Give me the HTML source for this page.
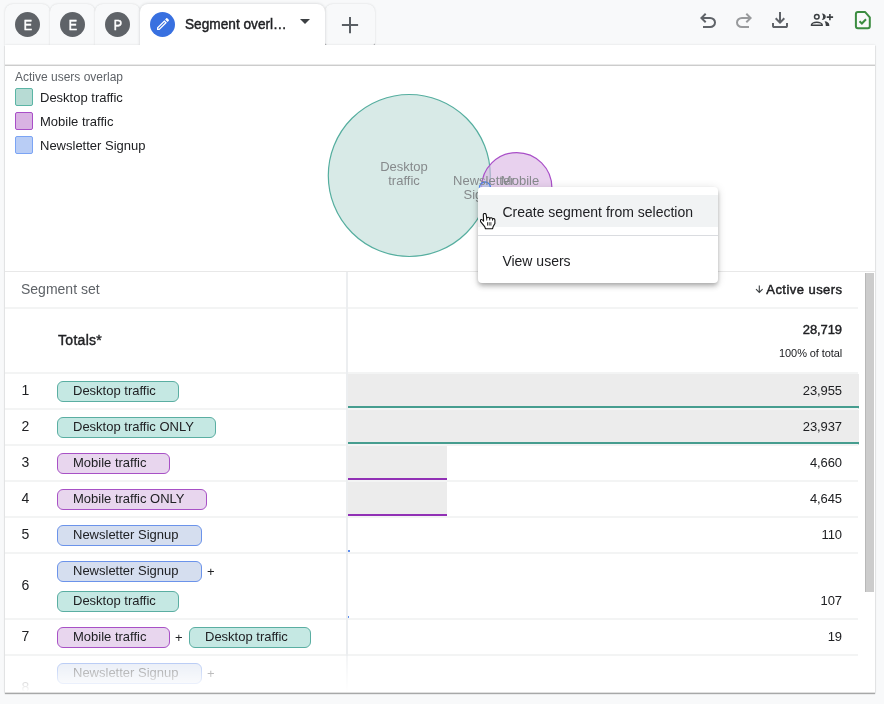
<!DOCTYPE html>
<html><head><meta charset="utf-8"><title>Segment overlap</title>
<style>
*{box-sizing:border-box;margin:0;padding:0}
html,body{width:884px;height:704px;overflow:hidden;background:#f8f9fa;font-family:"Liberation Sans",sans-serif;color:#202124}
.abs{position:absolute}
#panel{position:absolute;left:5px;top:45px;width:870px;height:648px;background:#fff;border-bottom:1px solid #e0e0e0;box-shadow:0 1px 1px rgba(0,0,0,.3),0 0 2px rgba(60,64,67,.14)}
.tab{position:absolute;top:4px;height:41px;clip-path:inset(-5px -5px 0 -5px);background:#f8f9fa;border-radius:8px 8px 0 0;box-shadow:0 0 2px rgba(60,64,67,.2)}
.tab.act{background:#fff;box-shadow:0 0 3px rgba(60,64,67,.25);z-index:2}
.av{position:absolute;top:8px;width:25px;height:25px;border-radius:50%;background:#5f6368;color:#fff;font-size:15px;-webkit-text-stroke:.5px #fff;text-align:center;line-height:25px}
.av span{display:inline-block;transform:scaleX(.83);margin-left:1px}
#hline{position:absolute;left:5px;top:64px;width:870px;height:2px;background:linear-gradient(#e9e9e9 50%,#cccccc 50%)}
.lg{position:absolute;left:15px;width:18px;height:18px;border-radius:2px;border:1px solid}
.lt{position:absolute;left:40px;margin-top:1px;font-size:13px;line-height:18px;white-space:nowrap}
.row{position:absolute;left:5px;width:853px;border-top:2px solid #f3f4f4}
.num{position:absolute;left:21.5px;margin-top:-1px;font-size:14px;color:#202124}
.chip{position:absolute;height:21px;border:1px solid;border-radius:6px;font-size:13px;line-height:18px;padding:0 0 0 15px;white-space:nowrap}
.c-d{background:#c5e8e3;border-color:#5aaea2}
.c-m{background:#e8d6ee;border-color:#a851c6}
.c-n{background:#d5deef;border-color:#6b93ea}
.val{position:absolute;right:42px;letter-spacing:-.1px;font-size:13px;text-align:right;white-space:nowrap}
.plus{position:absolute;font-size:13px}
</style></head><body>
<div id="wrap" style="position:absolute;left:0;top:0;width:884px;height:704px;will-change:transform">
<!-- tabs -->
<div class="tab" style="left:5px;width:45px"><div class="av" style="left:10px"><span>E</span></div></div>
<div class="tab" style="left:50px;width:45px"><div class="av" style="left:10px"><span>E</span></div></div>
<div class="tab" style="left:95px;width:45px"><div class="av" style="left:10px"><span>P</span></div></div>
<div class="abs" style="left:325px;top:42px;width:50px;height:3px;background:#9a9ea2"></div>
<div class="tab" style="left:325px;width:50px;border-radius:8px 8px 2px 2px"></div>
<div class="tab act" style="left:140px;width:185px">
  <div class="av" style="left:10px;background:#3870e0"></div>
  <div class="abs" style="left:45px;top:11px;font-size:14.7px;-webkit-text-stroke:.45px #202124;white-space:nowrap;line-height:18px;transform:scaleX(.93);transform-origin:0 0">Segment overl…</div>
</div>
<div id="panel"></div>
<div id="hline"></div>
<div class="abs" style="left:15px;top:70px;font-size:12px;color:#5f6368;line-height:14px;white-space:nowrap">Active users overlap</div>
<div class="lg" style="top:88px;background:#b7dbd4;border-color:#5bb5a5"></div><div class="lt" style="top:88px">Desktop traffic</div>
<div class="lg" style="top:112px;background:#d9b3e3;border-color:#a94fc8"></div><div class="lt" style="top:112px">Mobile traffic</div>
<div class="lg" style="top:136px;background:#b9cdf5;border-color:#7ba4f4"></div><div class="lt" style="top:136px">Newsletter Signup</div>

<!-- venn -->
<svg class="abs" style="left:0;top:0" width="884" height="704" viewBox="0 0 884 704">
  <circle cx="409.3" cy="175.5" r="81" fill="#d8eae7" stroke="#55ae9f" stroke-width="1.2"/>
  <circle cx="516.7" cy="187.800" r="35.2" fill="#d9b3e3" fill-opacity=".6" stroke="#a94fc8" stroke-width="1.2"/>
  <circle cx="485" cy="187.5" r="5.5" fill="#b9cdf5" fill-opacity=".6" stroke="#4a80f0" stroke-width="1.300"/>
  <g font-family="Liberation Sans, sans-serif" font-size="13" fill="#868a8c" text-anchor="middle">
    <text x="404" y="171.400">Desktop</text><text x="404" y="185.400">traffic</text>
    <text x="483.800" y="185.400">Newsletter</text><text x="483.800" y="199.400">Signup</text>
    <text x="520" y="185.400">Mobile</text>
  </g>
</svg>
<!-- table -->
<div class="abs" style="left:5px;top:271px;height:1px;width:870px;background:#e8e8e8"></div>
<div class="abs" style="left:21px;top:281px;font-size:14px;color:#5f6368;line-height:16px">Segment set</div>
<div class="abs" style="right:41.500px;top:282px;font-size:13px;letter-spacing:.45px;-webkit-text-stroke:.45px #202124;line-height:16px;white-space:nowrap">Active users</div>
<svg class="abs" style="left:755px;top:285px" width="9" height="9" viewBox="0 0 9 9"><path d="M4.300 0.500 V7.300 M1 4.200 L4.300 7.500 L7.600 4.200" fill="none" stroke="#3c4043" stroke-width="1.100"/></svg>
<div class="row" style="top:307px;height:65px"></div>
<div class="abs" style="left:58px;top:332px;font-size:14px;letter-spacing:.3px;-webkit-text-stroke:.4px #202124;line-height:16px">Totals*</div>
<div class="val" style="top:322px;-webkit-text-stroke:.4px #202124;font-size:13px;line-height:16px">28,719</div>
<div class="val" style="top:346px;font-size:11px;line-height:14px;letter-spacing:-.1px">100% of total</div>
<div class="row" style="top:372px;height:36px"></div>
<div class="abs" style="left:348px;top:374px;width:511px;height:34px;background:#ececec;border-bottom:2px solid #469d8f;box-shadow:0 1px 0 rgba(70,157,143,.3)"></div>
<div class="num" style="top:383px;line-height:16px">1</div>
<div class="chip c-d" style="left:57px;top:381px;width:122px">Desktop traffic</div>
<div class="val" style="top:383px;line-height:16px">23,955</div>
<div class="row" style="top:408px;height:36px"></div>
<div class="abs" style="left:348px;top:410px;width:511px;height:34px;background:#ececec;border-bottom:2px solid #469d8f;box-shadow:0 1px 0 rgba(70,157,143,.3)"></div>
<div class="num" style="top:419px;line-height:16px">2</div>
<div class="chip c-d" style="left:57px;top:417px;width:159px">Desktop traffic ONLY</div>
<div class="val" style="top:419px;line-height:16px">23,937</div>
<div class="row" style="top:444px;height:36px"></div>
<div class="abs" style="left:348px;top:446px;width:98.500px;height:34px;background:#ececec;border-bottom:2px solid #9130b5;box-shadow:0 1px 0 rgba(145,48,181,.3)"></div>
<div class="num" style="top:455px;line-height:16px">3</div>
<div class="chip c-m" style="left:57px;top:453px;width:113px">Mobile traffic</div>
<div class="val" style="top:455px;line-height:16px">4,660</div>
<div class="row" style="top:480px;height:36px"></div>
<div class="abs" style="left:348px;top:482px;width:98.500px;height:34px;background:#ececec;border-bottom:2px solid #9130b5;box-shadow:0 1px 0 rgba(145,48,181,.3)"></div>
<div class="num" style="top:491px;line-height:16px">4</div>
<div class="chip c-m" style="left:57px;top:489px;width:150px">Mobile traffic ONLY</div>
<div class="val" style="top:491px;line-height:16px">4,645</div>
<div class="row" style="top:516px;height:36px"></div>
<div class="abs" style="left:348px;top:550px;width:2px;height:2px;background:#5e8ff0"></div>
<div class="num" style="top:527px;line-height:16px">5</div>
<div class="chip c-n" style="left:57px;top:525px;width:145px">Newsletter Signup</div>
<div class="val" style="top:527px;line-height:16px">110</div>

<div class="row" style="top:552px;height:66px"></div>
<div class="abs" style="left:348px;top:616px;width:1px;height:2px;background:#5e8ff0"></div>
<div class="num" style="top:578px;line-height:16px">6</div>
<div class="chip c-n" style="left:57px;top:561px;width:145px">Newsletter Signup</div>
<div class="plus" style="left:207px;top:564px;line-height:16px">+</div>
<div class="chip c-d" style="left:57px;top:591px;width:122px">Desktop traffic</div>
<div class="val" style="top:593px;line-height:16px">107</div>
<div class="row" style="top:618px;height:36px"></div>
<div class="num" style="top:629px;line-height:16px">7</div>
<div class="chip c-m" style="left:57px;top:627px;width:113px">Mobile traffic</div>
<div class="plus" style="left:175px;top:630px;line-height:16px">+</div>
<div class="chip c-d" style="left:189px;top:627px;width:122px">Desktop traffic</div>
<div class="val" style="top:629px;line-height:16px">19</div>
<div class="row" style="top:654px;height:37px"></div>
<div class="num" style="top:680px;line-height:16px;height:12px;overflow:hidden">8</div>
<div class="chip c-n" style="left:57px;top:663px;width:145px">Newsletter Signup</div>
<div class="plus" style="left:207px;top:666px;line-height:16px">+</div>
<!-- col divider -->
<div class="abs" style="left:346px;top:272px;width:2px;height:420px;background:#eceef0"></div>
<!-- fade -->
<div class="abs" style="left:5px;top:656px;width:853px;height:36px;background:linear-gradient(rgba(255,255,255,.42),rgba(255,255,255,1))"></div>
<!-- scrollbar -->
<div class="abs" style="left:865px;top:273px;width:9px;height:319px;background:#cccccc;border-left:1px solid #b8b8b8"></div>
<!-- menu -->
<div class="abs" id="menu" style="left:478px;top:187px;width:240px;height:96px;background:#fff;border-radius:4px;box-shadow:0 2px 4px -1px rgba(0,0,0,.2),0 4px 5px 0 rgba(0,0,0,.14),0 1px 10px 0 rgba(0,0,0,.12)">
  <div class="abs" style="left:0;top:8px;width:240px;height:32px;background:#f1f3f4"></div>
  <div class="abs" style="left:24.400px;top:17px;font-size:14px;line-height:16px;white-space:nowrap">Create segment from selection</div>
  <div class="abs" style="left:0;top:48px;width:240px;height:1px;background:#dadce0"></div>
  <div class="abs" style="left:24.400px;top:66px;font-size:14px;line-height:16px;white-space:nowrap">View users</div>
</div>

<!-- tab icons -->
<svg class="abs" style="left:154.7px;top:16.2px;z-index:3" width="16" height="16" viewBox="0 0 24 24"><path fill="#fff" d="M14.06 9.02l.92.92L5.92 19H5v-.92l9.060-9.060M17.660 3c-.25 0-.51.1-.7.29l-1.830 1.830 3.750 3.750 1.830-1.830c.39-.39.39-1.020 0-1.410l-2.340-2.340c-.2-.2-.45-.29-.71-.29zm-3.600 3.190L3 17.250V21h3.750L17.810 9.940l-3.750-3.750z"/></svg>
<svg class="abs" style="left:300px;top:19px;z-index:3" width="10" height="5" viewBox="0 0 10 5"><path fill="#3c4043" d="M0 0h10L5 5z"/></svg>
<svg class="abs" style="left:341px;top:16px;z-index:3" width="18" height="18" viewBox="0 0 18 18"><path stroke="#5a5f64" stroke-width="2" fill="none" d="M9 1v16.200M0.900 9.100h16.200"/></svg>
<!-- toolbar -->
<svg class="abs" style="left:696px;top:9.300px" width="24" height="24" viewBox="0 -960 960 960"><path fill="#5f6368" d="M280-200v-80h284q63 0 109.500-40T720-420q0-60-46.500-100T564-560H312l104 104-56 56-200-200 200-200 56 56-104 104h252q97 0 166.500 63T800-420q0 94-69.500 157T564-200H280Z"/></svg>
<svg class="abs" style="left:731.700px;top:9.300px" width="24" height="24" viewBox="0 -960 960 960"><path fill="#989a9c" d="M396-200q-97 0-166.500-63T160-420q0-94 69.500-157T396-640h252L544-744l56-56 200 200-200 200-56-56 104-104H396q-63 0-109.500 40T240-420q0 60 46.500 100T396-280h284v80H396Z"/></svg>
<svg class="abs" style="left:767.800px;top:8.100px" width="24" height="24" viewBox="0 -960 960 960"><path fill="#5f6368" d="M480-320 280-520l56-58 104 104v-326h80v326l104-104 56 58-200 200ZM240-160q-33 0-56.500-23.500T160-240v-120h80v120h480v-120h80v120q0 33-23.500 56.500T720-160H240Z"/></svg>
<svg class="abs" style="left:808px;top:10px" width="28" height="20" viewBox="808 10 28 20">
  <circle cx="816.800" cy="16.700" r="2.300" fill="none" stroke="#3c4043" stroke-width="1.500"/>
  <path d="M811.400 25.300 C811.400 23.600 814 22.300 816.800 22.300 C819.600 22.300 822.300 23.600 822.300 25.300 Z" fill="none" stroke="#3c4043" stroke-width="1.500" stroke-linejoin="round"/>
  <path d="M821.800 13.500 C824.300 13.600 825.800 15 825.800 16.700 C825.800 18.400 824.300 19.900 821.800 20 C823.500 18.200 823.500 15.300 821.800 13.500 Z" fill="#3c4043"/>
  <path d="M824.600 21.200 C827.200 21.400 829.300 22.800 829.300 25 L829.300 26.100 L825.800 26.100 C825.800 24.200 825.500 22.800 824.600 21.200 Z" fill="#3c4043"/>
  <path d="M829.900 14 V20.300 M826.700 17.150 H833.100" stroke="#3c4043" stroke-width="1.600" fill="none"/>
</svg>
<svg class="abs" style="left:852px;top:9px" width="22" height="22" viewBox="852 9 22 22">
  <path d="M857.900 12.100 H865.200 L869.800 17.300 V26.200 Q869.800 28.200 867.800 28.200 H857.900 Q855.900 28.200 855.900 26.200 V14.100 Q855.900 12.100 857.900 12.100 Z" fill="none" stroke="#3b8c40" stroke-width="2" stroke-linejoin="round"/>
  <path d="M859.500 21.200 L861.900 23.500 L866 19.200" fill="none" stroke="#3b8c40" stroke-width="2"/>
</svg>
<!-- cursor -->
<svg class="abs" style="left:480px;top:213px" width="16" height="17" viewBox="0 0 16 17">
  <path d="M3.600 8.100 L3.300 2 Q3.300 0.400 4.700 0.400 Q6.100 0.400 6.300 2.200 L6.700 5.500 Q6.900 4.300 8.200 4.300 Q9.500 4.300 9.700 5.700 Q10 4.600 11.200 4.700 Q12.400 4.800 12.500 6.300 Q12.900 5.400 13.900 5.600 Q14.900 5.800 14.900 7.200 L14.900 10.400 L13.200 13.400 L12.600 15.700 L5.500 15.700 L4.700 13.700 L0.600 8.600 Q0.100 7.200 1 6.600 Q2 6.200 3.600 8.100 Z" fill="#fff" stroke="#111" stroke-width="1.100" stroke-linejoin="round"/>
  <path d="M6.700 5.500 V7.600 M9.700 5.700 V7.400 M12.500 6.300 V7.600" stroke="#111" stroke-width=".9" fill="none"/>
  <path d="M7.500 9.200 V12.600 M9.200 9.200 V12.600 M10.900 9.200 V12.600" stroke="#111" stroke-width=".8" fill="none"/>
</svg>
</div>
</body></html>
